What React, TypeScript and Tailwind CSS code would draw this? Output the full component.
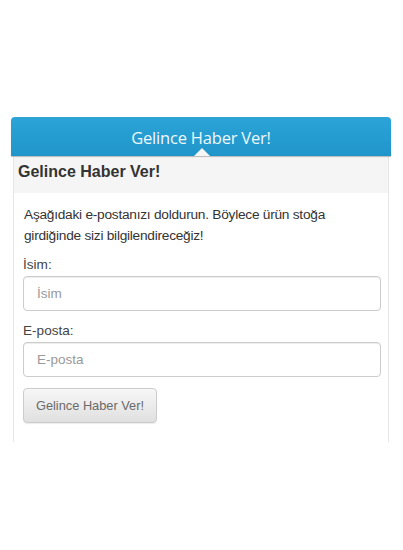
import React from "react";

export default function App() {
  return (
    <div className="w-[403px] h-[550px] bg-white pt-[117px] pl-[11px] font-['Liberation_Sans',Arial,sans-serif] text-[#333]">
      <div className="w-[380px]">
        <div className="relative h-[39px] rounded-t-[4px] bg-gradient-to-b from-[#2ca4d8] to-[#1f95c9] shadow-[0_1px_1px_rgba(0,0,0,0.25)] flex items-center justify-center pt-[2px]">
          <span className="font-['Open_Sans',sans-serif] text-[16.5px] leading-[20px] text-[#eef8fd] tracking-[-0.2px]">
            Gelince Haber Ver!
          </span>
          <div className="absolute left-[183px] bottom-0 w-0 h-0 border-l-[8px] border-r-[8px] border-b-[8px] border-l-transparent border-r-transparent border-b-[#f5f5f5]" />
        </div>
        <div className="mx-[2px] border-x border-[#e6e6e6]">
          <div className="h-[37px] bg-[#f5f5f5] pl-[4px] pt-[7px]">
            <h3 className="text-[16px] leading-[18px] font-bold text-[#333]">Gelince Haber Ver!</h3>
          </div>
          <div className="bg-white pl-[9px] pr-[10px] pt-[11px] pb-[19px] text-[12.8px] leading-[21px]">
            <p className="mb-[9px] pl-[1px] max-w-[342px] text-[13.7px] tracking-[-0.25px]">
              Aşağıdaki e-postanızı doldurun. Böylece ürün stoğa girdiğinde sizi bilgilendireceğiz!
            </p>
            <label className="block text-[#444] text-[13.6px] leading-[20px] mb-[1px]">İsim:</label>
            <input
              placeholder="İsim"
              className="block w-[358px] h-[35px] px-[13px] text-[13.5px] rounded-[4px] border border-[#ccc] shadow-[inset_0_1px_1px_rgba(0,0,0,0.075)] placeholder:text-[#999] outline-none"
            />
            <label className="block text-[#444] text-[13.6px] leading-[20px] mt-[10px] mb-[1px]">E-posta:</label>
            <input
              placeholder="E-posta"
              className="block w-[358px] h-[35px] px-[13px] text-[13.5px] rounded-[4px] border border-[#ccc] shadow-[inset_0_1px_1px_rgba(0,0,0,0.075)] placeholder:text-[#999] outline-none"
            />
            <button className="mt-[11px] h-[35px] w-[134px] rounded-[4px] border border-[#ccc] bg-gradient-to-b from-[#f7f7f7] to-[#e0e0e0] text-[12.8px] text-[#6a6a6a] shadow-[0_1px_1px_rgba(0,0,0,0.08)]">
              Gelince Haber Ver!
            </button>
          </div>
        </div>
      </div>
    </div>
  );
}
